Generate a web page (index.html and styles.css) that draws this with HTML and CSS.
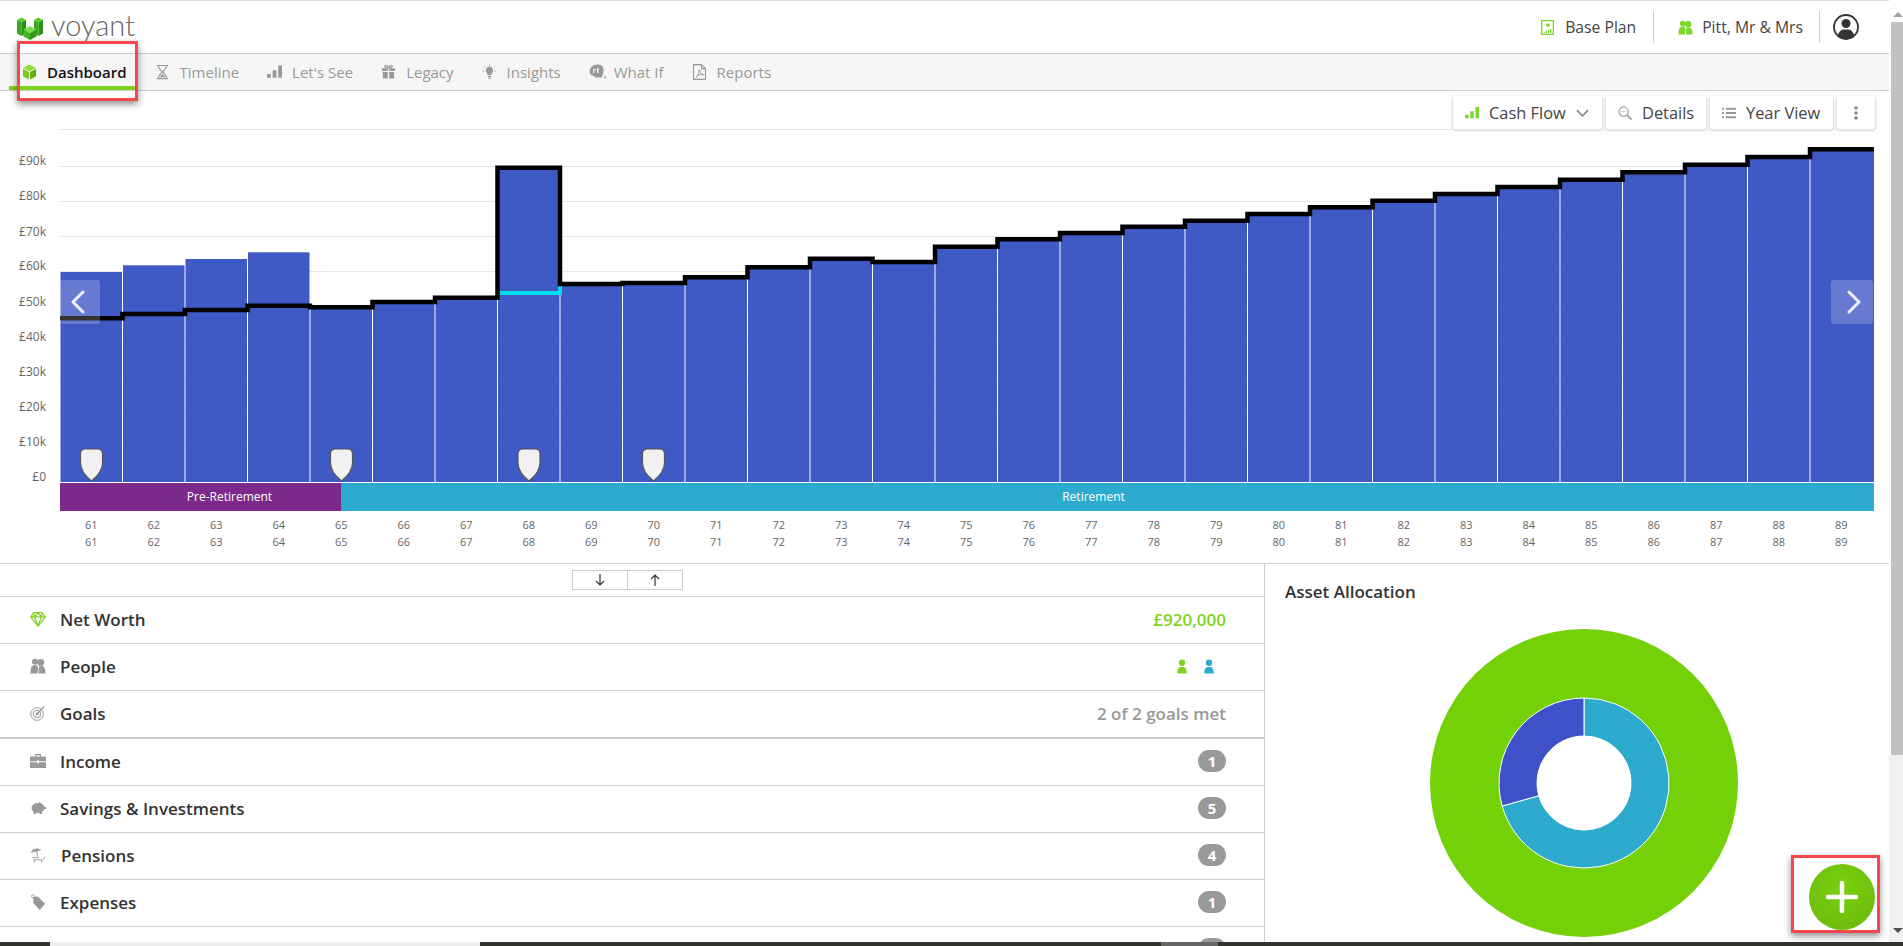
FILE: index.html
```html
<!DOCTYPE html>
<html lang="en">
  <head>
    <meta charset="UTF-8" />
    <title>Voyant - Dashboard</title>
    <link rel="stylesheet" href="styles.css">
  </head>
  <body>
    <svg class="sprites" width="0" height="0">
      <defs>
        <symbol id="i-cube" viewBox="0 0 16 16">
          <path fill="#8fdc2c" d="M8 0l6.600 3.600L8 7.200 1.400 3.600z"/>
          <path fill="#7bc91f" d="M1 4.600l6.400 3.500V16L1 12.400z"/>
          <path fill="#62ad14" d="M15 4.600L8.600 8.100V16l6.400-3.600z"/>
        </symbol>
        <symbol id="i-hourglass" viewBox="0 0 16 16">
          <path fill="none" stroke="currentColor" stroke-width="1.200" d="M2 1h12M2 15h12M3.500 1c0 4 4 5.500 4 7s-4 3-4 7M12.500 1c0 4-4 5.500-4 7s4 3 4 7"/>
          <path fill="currentColor" d="M5 13.500l3-3.500 3 3.500z"/>
        </symbol>
        <symbol id="i-bars" viewBox="0 0 16 16">
          <path fill="currentColor" d="M0 10h4v4H0zM6 6h4v8H6zM12 1h4v13h-4z"/>
        </symbol>
        <symbol id="i-gift" viewBox="0 0 16 16">
          <path fill="currentColor" d="M1 4h6.200v3H1zM8.800 4H15v3H8.800zM2 8h5.200v7H2zM8.800 8H14v7H8.800z"/>
          <path fill="none" stroke="currentColor" stroke-width="1.300" d="M8 3.500C6.500.5 3.500.5 4 2.500c.3 1 2 1 4 1zm0 0c1.500-3 4.500-3 4-1-.3 1-2 1-4 1z"/>
        </symbol>
        <symbol id="i-bulb" viewBox="0 0 16 16">
          <path fill="currentColor" d="M8 2.500a4 4 0 0 1 2.600 7c-.6.600-.8 1.200-.8 2H6.200c0-.8-.2-1.400-.8-2A4 4 0 0 1 8 2.500zM6.400 12.300h3.200v1.200H6.400zM7 14h2v1.500H7z"/>
          <path stroke="currentColor" d="M8 0v1.500M2.500 2l1 1M13.500 2l-1 1M1 7h1.500M13.500 7H15"/>
        </symbol>
        <symbol id="i-whatif" viewBox="0 0 18 16">
          <path fill="currentColor" d="M3 2.500C5 .5 10-.5 12.500 1.500c2.500 2 2.500 6 1.500 8.500l-1 3.500H6L5.500 12C3 12 0 10 .7 6.500c.2-1.500 1-3 2.300-4z"/>
          <path fill="#f6f6f6" d="M4 9h1.300V6H7V5H4.500zM8 9h1.500V4H8z"/>
          <circle cx="16" cy="13.500" r="1" fill="currentColor"/>
        </symbol>
        <symbol id="i-pdf" viewBox="0 0 14 16">
          <path fill="none" stroke="currentColor" stroke-width="1.100" d="M1 .6h8l4 4v10.800H1zM9 .6v4h4"/>
          <path fill="none" stroke="currentColor" stroke-width=".9" d="M3.500 13c2-1 3-4 3-6.500 0-1 1-.8 1 .2C7.500 9 9 11 10.800 11c1 0 .6-1-.5-1-2 0-5 1.500-6.800 3z"/>
        </symbol>
        <symbol id="i-people" viewBox="0 0 16 16">
          <circle cx="5" cy="3.800" r="3" fill="currentColor"/>
          <path fill="currentColor" d="M.5 15.500c0-4.500.5-7 2.500-8.200h4C8.500 9 8 11 7.500 15.500z"/>
          <circle cx="10.800" cy="4.400" r="3.400" fill="currentColor"/>
          <path fill="currentColor" d="M8.500 15.500c0-4 0-6 1-7.500h3c2.500 1 3 3.500 3 7.500z"/>
        </symbol>
        <symbol id="i-person" viewBox="0 0 12 16">
          <circle cx="6" cy="4" r="3.400" fill="currentColor"/>
          <path fill="currentColor" d="M1 15.500c0-3.500.5-6 3-7h4c2.500 1 3 3.500 3 7z"/>
        </symbol>
        <symbol id="i-diamond" viewBox="0 0 16 16">
          <path fill="none" stroke="currentColor" stroke-width="1.200" d="M4 1.500h8l3.300 4.300L8 15 .7 5.800zM.7 5.800h14.600M4.500 5.800L8 15l3.500-9.200M4 1.500l.5 4.300L8 1.500l3.500 4.300.5-4.300"/>
        </symbol>
        <symbol id="i-target" viewBox="0 0 16 16">
          <g fill="none" stroke="currentColor">
            <circle cx="7" cy="9" r="6.300"/>
            <circle cx="7" cy="9" r="3.800"/>
            <path stroke-width="1.300" d="M7 9l7-7.500"/>
          </g>
          <circle cx="7" cy="9" r="1.500" fill="currentColor"/>
        </symbol>
        <symbol id="i-case" viewBox="0 0 16 16">
          <path fill="none" stroke="currentColor" stroke-width="1.200" d="M5.500 3.500V1.700h5v1.800"/>
          <path fill="currentColor" d="M0 3.500h16v4.800H9v-1H7v1H0zM0 9.300h7v1h2v-1h7V15H0z"/>
        </symbol>
        <symbol id="i-piggy" viewBox="0 0 16 16">
          <ellipse cx="8" cy="8" rx="6.500" ry="5" fill="currentColor"/>
          <path fill="currentColor" d="M3.500 10h2.500v4H3.500zM9.500 10H12v4H9.500zM9.500 1.500l3 3.500-4-.5zM14 7h2v2h-2z"/>
        </symbol>
        <symbol id="i-beach" viewBox="0 0 18 18">
          <path fill="currentColor" d="M1 7C2 2 8 0 13 3.500 11 4 9 4.500 7.500 5.500 5.500 5 3 5.500 1 7z"/>
          <path fill="none" stroke="currentColor" d="M7 3l2 8M4 14.500h10l3-3.500M5 14.500v3M13 14.500v3M3 12h7"/>
        </symbol>
        <symbol id="i-tag" viewBox="0 0 16 18">
          <path fill="currentColor" d="M3 3h5l8 8-6 7-7.500-8z"/>
          <circle cx="2.500" cy="2.500" r="1.800" fill="none" stroke="currentColor"/>
        </symbol>
      </defs>
    </svg>

    <div class="app">
      <div class="page">
        <header class="topbar">
          <a class="logo">
            <svg class="logo-mark" viewBox="0 0 26 23">
              <path fill="#56cc2e" d="M0 3l4.500-2.500L9 3 4.500 5.500z"/>
              <path fill="#39a81f" d="M0 3l4.500 2.500V19L0 16.500z"/>
              <path fill="#2b8f18" d="M9 3L4.500 5.500V19L9 16.500z"/>
              <path fill="#56cc2e" d="M17 3l4.500-2.500L26 3l-4.500 2.500z"/>
              <path fill="#39a81f" d="M17 3l4.500 2.500V19L17 16.500z"/>
              <path fill="#2b8f18" d="M26 3l-4.500 2.500V19l4.500-2.500z"/>
              <path fill="#7be04a" d="M6.500 12.500L13 9l6.500 3.500L13 16z"/>
              <path fill="#44b826" d="M6.500 12.500L13 16v7l-6.500-3.500z"/>
              <path fill="#2f9a1c" d="M19.500 12.500L13 16v7l6.500-3.500z"/>
            </svg>
            <span class="logo-text">voyant</span>
          </a>
          <div class="top-links">
            <span class="top-link">
              <svg class="icon-plan" viewBox="0 0 13 15">
                <path fill="none" stroke="#79d92a" stroke-width="1.300" d="M.7.7h11.600v13.600H.7z"/>
                <circle cx="7" cy="5" r="1.800" fill="#79d92a"/>
                <path fill="#79d92a" d="M3 12h1.200v1H3zM5 11h1.200v2H5zM7 10h1.200v3H7zM9 9h1.200v4H9z"/>
              </svg>
              Base Plan
            </span>
            <span class="top-link">
              <svg class="icon-top-people"><use href="#i-people"/></svg>
              Pitt, Mr &amp; Mrs
            </span>
            <span class="top-user">
              <svg viewBox="0 0 26 26" width="26" height="26">
                <circle cx="13" cy="13" r="12" fill="#fff" stroke="#333" stroke-width="1.800"/>
                <circle cx="13" cy="9.500" r="4.500" fill="#333"/>
                <path fill="#333" d="M4.800 21.500c1-4 3.500-5.500 5.500-6h5.400c2 .5 4.500 2 5.500 6a12 12 0 0 1-16.400 0z"/>
              </svg>
            </span>
          </div>
        </header>

        <nav class="tabs">
          <a class="tab active"><svg class="tab-icon"><use href="#i-cube"/></svg>Dashboard</a>
          <a class="tab"><svg class="tab-icon"><use href="#i-hourglass"/></svg>Timeline</a>
          <a class="tab"><svg class="tab-icon"><use href="#i-bars"/></svg>Let's See</a>
          <a class="tab"><svg class="tab-icon"><use href="#i-gift"/></svg>Legacy</a>
          <a class="tab"><svg class="tab-icon"><use href="#i-bulb"/></svg>Insights</a>
          <a class="tab tab-whatif"><svg class="tab-icon"><use href="#i-whatif"/></svg>What If</a>
          <a class="tab"><svg class="tab-icon"><use href="#i-pdf"/></svg>Reports</a>
        </nav>

        <div class="toolbar">
          <button class="tool tool-cash">
            <svg class="tool-icon green"><use href="#i-bars"/></svg>
            Cash Flow
            <svg class="tool-caret" viewBox="0 0 14 8"><path fill="none" stroke="#888" stroke-width="1.800" d="M1 1l6 6 6-6"/></svg>
          </button>
          <button class="tool tool-details">
            <svg class="tool-icon" viewBox="0 0 15 15">
              <circle cx="6" cy="6" r="5" fill="none" stroke="#999" stroke-width="1.200"/>
              <path stroke="#999" stroke-width="1.800" d="M9.800 9.800L14.500 14.500"/>
              <path stroke="#999" stroke-dasharray="1.200 1" d="M3.500 6h5"/>
            </svg>
            Details
          </button>
          <button class="tool tool-year">
            <svg class="tool-icon" viewBox="0 0 15 13">
              <path fill="#999" d="M0 1h2v2H0zM4 1h11v2H4zM0 5.500h2v2H0zM4 5.500h11v2H4zM0 10h2v2H0zM4 10h11v2H4z"/>
            </svg>
            Year View
          </button>
          <button class="tool tool-more">
            <svg viewBox="0 0 4 14" width="4" height="14">
              <circle cx="2" cy="2" r="1.800" fill="#888"/>
              <circle cx="2" cy="7" r="1.800" fill="#888"/>
              <circle cx="2" cy="12" r="1.800" fill="#888"/>
            </svg>
          </button>
        </div>

        <section class="chart">
          <svg class="plot" viewBox="0 129 1889 354" width="1889" height="354">
            <defs>
              <path id="shield" d="M-11 5q0-5 5-5H6q5 0 5 5v9c0 8-6 14-11 18-5-4-11-10-11-18z"/>
            </defs>
            <g class="grid">
              <path d="M60 129.500H1874M60 166.500H1874M60 201.500H1874M60 236.500H1874M60 271.500H1874M60 306.500H1874M60 342.500H1874M60 377.500H1874M60 412.500H1874M60 447.500H1874"/>
            </g>
            <g class="y-labels">
              <text x="46" y="165">£90k</text>
              <text x="46" y="200">£80k</text>
              <text x="46" y="236">£70k</text>
              <text x="46" y="270">£60k</text>
              <text x="46" y="306">£50k</text>
              <text x="46" y="341">£40k</text>
              <text x="46" y="376">£30k</text>
              <text x="46" y="411">£20k</text>
              <text x="46" y="446">£10k</text>
              <text x="46" y="481">£0</text>
            </g>
            <g class="bars">
              <rect x="60.500" y="272" width="61.500" height="210"/>
              <rect x="123" y="265.300" width="61.500" height="216.700"/>
              <rect x="185.500" y="259" width="61.500" height="223"/>
              <rect x="248" y="252.300" width="61.500" height="229.700"/>
              <rect x="310.500" y="307.300" width="61.500" height="174.700"/>
              <rect x="373" y="302" width="61.500" height="180"/>
              <rect x="435.500" y="297.700" width="61.500" height="184.300"/>
              <rect x="498" y="167.700" width="61.500" height="314.300"/>
              <rect x="560.500" y="284" width="61.500" height="198"/>
              <rect x="623" y="283" width="61.500" height="199"/>
              <rect x="685.500" y="277.300" width="61.500" height="204.700"/>
              <rect x="748" y="267.300" width="61.500" height="214.700"/>
              <rect x="810.500" y="258.700" width="61.500" height="223.300"/>
              <rect x="873" y="262" width="61.500" height="220"/>
              <rect x="935.500" y="246.700" width="61.500" height="235.300"/>
              <rect x="998" y="239.300" width="61.500" height="242.700"/>
              <rect x="1060.500" y="233" width="61.500" height="249"/>
              <rect x="1123" y="226.700" width="61.500" height="255.300"/>
              <rect x="1185.500" y="220.700" width="61.500" height="261.300"/>
              <rect x="1248" y="214" width="61.500" height="268"/>
              <rect x="1310.500" y="207.300" width="61.500" height="274.700"/>
              <rect x="1373" y="200.700" width="61.500" height="281.300"/>
              <rect x="1435.500" y="194" width="61.500" height="288"/>
              <rect x="1498" y="187" width="61.500" height="295"/>
              <rect x="1560.500" y="179.700" width="61.500" height="302.300"/>
              <rect x="1623" y="172.300" width="61.500" height="309.700"/>
              <rect x="1685.500" y="164.700" width="61.500" height="317.300"/>
              <rect x="1748" y="157" width="61.500" height="325"/>
              <rect x="1810.500" y="149.300" width="63.500" height="332.700"/>
            </g>
            <path class="bonus" d="M499 293H560V286"/>
            <path class="line" d="M60 318.300H122.500V314H185V310H247.500V305.700H310V307.300H372.500V302H435V297.700H497.500V167.700H560V284H622.500V283H685V277.300H747.500V267.300H810V258.700H872.500V262H935V246.700H997.500V239.300H1060V233H1122.500V226.700H1185V220.700H1247.500V214H1310V207.300H1372.500V200.700H1435V194H1497.500V187H1560V179.700H1622.500V172.300H1685V164.700H1747.500V157H1810V149.300H1874"/>
            <g class="shields">
              <use href="#shield" x="91.500" y="449"/>
              <use href="#shield" x="341.500" y="449"/>
              <use href="#shield" x="529" y="449"/>
              <use href="#shield" x="653.500" y="449"/>
            </g>
            <g class="pager">
              <rect x="60" y="280" width="40" height="44" rx="3"/>
              <rect x="1831" y="280" width="42" height="44" rx="3"/>
              <path d="M83 292L73 302L83 312M1849 292L1859 302L1849 312"/>
            </g>
          </svg>

          <div class="phases">
            <div class="phase phase-pre">Pre-Retirement</div>
            <div class="phase phase-ret">Retirement</div>
          </div>

          <div class="ages">
            <span>61</span><span>62</span><span>63</span><span>64</span><span>65</span><span>66</span><span>67</span><span>68</span><span>69</span><span>70</span>
            <span>71</span><span>72</span><span>73</span><span>74</span><span>75</span><span>76</span><span>77</span><span>78</span><span>79</span><span>80</span>
            <span>81</span><span>82</span><span>83</span><span>84</span><span>85</span><span>86</span><span>87</span><span>88</span><span>89</span>
            <span>61</span><span>62</span><span>63</span><span>64</span><span>65</span><span>66</span><span>67</span><span>68</span><span>69</span><span>70</span>
            <span>71</span><span>72</span><span>73</span><span>74</span><span>75</span><span>76</span><span>77</span><span>78</span><span>79</span><span>80</span>
            <span>81</span><span>82</span><span>83</span><span>84</span><span>85</span><span>86</span><span>87</span><span>88</span><span>89</span>
          </div>
        </section>

        <section class="lower">
          <div class="list">
            <div class="sorter">
              <div class="sorter-box">
                <button><svg viewBox="0 0 10 12" width="10" height="12"><path fill="none" stroke="#333" stroke-width="1.200" d="M5 0v11M1 7l4 4 4-4"/></svg></button>
                <button><svg viewBox="0 0 10 12" width="10" height="12"><path fill="none" stroke="#333" stroke-width="1.200" d="M5 12V1M1 5l4-4 4 4"/></svg></button>
              </div>
            </div>
            <div class="row">
              <svg class="row-icon green"><use href="#i-diamond"/></svg>
              <span class="row-label">Net Worth</span>
              <span class="row-value value-money">£920,000</span>
            </div>
            <div class="row">
              <svg class="row-icon"><use href="#i-people"/></svg>
              <span class="row-label">People</span>
              <span class="row-people">
                <svg class="person green"><use href="#i-person"/></svg>
                <svg class="person teal"><use href="#i-person"/></svg>
              </span>
            </div>
            <div class="row row-last">
              <svg class="row-icon"><use href="#i-target"/></svg>
              <span class="row-label">Goals</span>
              <span class="row-value value-muted">2 of 2 goals met</span>
            </div>
            <div class="row">
              <svg class="row-icon"><use href="#i-case"/></svg>
              <span class="row-label">Income</span>
              <span class="badge">1</span>
            </div>
            <div class="row">
              <svg class="row-icon"><use href="#i-piggy"/></svg>
              <span class="row-label">Savings &amp; Investments</span>
              <span class="badge">5</span>
            </div>
            <div class="row">
              <svg class="row-icon"><use href="#i-beach"/></svg>
              <span class="row-label label-pensions">Pensions</span>
              <span class="badge">4</span>
            </div>
            <div class="row">
              <svg class="row-icon"><use href="#i-tag"/></svg>
              <span class="row-label">Expenses</span>
              <span class="badge">1</span>
            </div>
            <div class="row">
              <span class="row-label"></span>
              <span class="badge"></span>
            </div>
          </div>

          <aside class="allocation">
            <h3>Asset Allocation</h3>
            <svg class="donut" viewBox="-155 -155 310 310" width="310" height="310">
              <circle r="154" fill="#74d108"/>
              <path fill="#2cabcf" stroke="#fff" d="M0-85A85 85 0 1 1-81.800 23L-45.200 12.700A47 47 0 1 0 0-47z"/>
              <path fill="#3f51c9" stroke="#fff" d="M0-85A85 85 0 0 0-81.800 23L-45.200 12.700A47 47 0 0 1 0-47z"/>
              <circle r="47" fill="#fff"/>
            </svg>
          </aside>
        </section>
      </div>

      <div class="scrollbar">
        <span class="arrow-up"></span>
        <div class="thumb"></div>
        <span class="arrow-down"></span>
      </div>
    </div>

    <button class="fab" aria-label="add">
      <svg viewBox="0 0 32 32" width="32" height="32"><path stroke="#fff" stroke-width="4.500" stroke-linecap="round" d="M16 2v28M2 16h28"/></svg>
    </button>
    <div class="callout callout-tab"></div>
    <div class="callout callout-fab"></div>

    <div class="taskbar">
      <span class="task-a"></span>
      <span class="task-b"></span>
      <span class="task-c"></span>
      <span class="task-d"></span>
      <span class="task-e"></span>
    </div>
  </body>
</html>
```

FILE: styles.css
```css
*,
*::before,
*::after {
  box-sizing: border-box;
  margin: 0;
  padding: 0;
}

body {
  font-family: 'Open Sans', 'Liberation Sans', sans-serif;
  color: #333;
  background: #fff;
  height: 100vh;
  overflow: hidden;
}

.sprites {
  position: absolute;
}

.app {
  display: flex;
  height: 946px;
  overflow: hidden;
}

.page {
  width: 1889px;
  flex: none;
  border-top: 1px solid #dcdce2;
}

/* top bar */
.topbar {
  height: 53px;
  border-bottom: 1px solid #ccc;
  display: flex;
  justify-content: space-between;
  align-items: center;
}

.logo {
  display: flex;
  align-items: center;
  gap: 8px;
  padding-left: 17px;
  height: 100%;
}

.logo-mark {
  width: 26px;
  height: 23px;
  margin-top: 3px;
}

.logo-text {
  font-family: Lato, 'Open Sans', sans-serif;
  font-weight: 300;
  font-size: 29px;
  line-height: 1;
  color: #666;
  margin-top: -6px;
}

.top-links {
  display: flex;
  align-items: center;
  padding-right: 30px;
}

.top-link {
  display: flex;
  align-items: center;
  gap: 11px;
  height: 32px;
  font-size: 15.7px;
  color: #444;
  padding-right: 17px;
  margin-right: 24px;
  border-right: 1px solid #ccc;
}

.top-link + .top-link {
  gap: 9px;
  padding-right: 16px;
  margin-right: 13px;
}

.icon-plan {
  width: 13px;
  height: 15px;
}

.icon-top-people {
  width: 15px;
  height: 15px;
  color: #79d92a;
}

.top-user {
  display: flex;
}

/* tabs */
.tabs {
  height: 37px;
  background: #f6f6f6;
  border-bottom: 1px solid #ccc;
  display: flex;
  padding-left: 9px;
}

.tab {
  display: flex;
  align-items: center;
  gap: 10px;
  font-size: 15px;
  color: #999;
  margin-right: 28px;
  padding-bottom: 1px;
}

.tab:first-child {
  padding-left: 13px;
  padding-right: 10px;
  margin-right: 18px;
}

.tab.active {
  color: #111;
  font-weight: 600;
  border-bottom: 4px solid #7ed321;
  padding-top: 4px;
}

.tab-icon {
  width: 15px;
  height: 16px;
  color: #999;
}

.tab-whatif {
  gap: 7px;
}

.tab-whatif .tab-icon {
  width: 18px;
}

/* toolbar */
.toolbar {
  height: 38px;
  display: flex;
  justify-content: flex-end;
  gap: 4px;
  padding: 5px 14px 0 0;
}

.tool {
  height: 33px;
  display: flex;
  align-items: center;
  gap: 10px;
  padding: 0 0 0 12px;
  background: #fff;
  border: 0;
  border-radius: 2px;
  box-shadow: 0 1px 3px rgba(0, 0, 0, 0.35);
  font-family: inherit;
  font-size: 16.4px;
  font-weight: 500;
  color: #444;
}

.tool-cash {
  width: 149px;
}

.tool-details {
  width: 100px;
}

.tool-year {
  width: 123px;
}

.tool-icon {
  width: 14px;
  height: 14px;
  color: #999;
}

.tool-icon.green {
  color: #79d92a;
}

.tool-caret {
  width: 13px;
  height: 8px;
}

.tool-more {
  width: 38px;
  justify-content: center;
  padding: 0;
}

/* chart */
.chart {
  height: 434px;
}

.plot {
  display: block;
}

.grid path {
  stroke: #e8e8e8;
  fill: none;
}

.y-labels text {
  font-size: 12px;
  fill: #666;
  text-anchor: end;
}

.bars rect {
  fill: #3f59c5;
}

.bonus {
  fill: none;
  stroke: #00dde8;
  stroke-width: 4;
}

.line {
  fill: none;
  stroke: #000;
  stroke-width: 4.5;
}

.shields use {
  fill: #f1f1f1;
  stroke: #555;
  stroke-width: 1.2;
}

.pager rect {
  fill: rgba(255, 255, 255, 0.2);
}

.pager path {
  fill: none;
  stroke: #eef;
  stroke-width: 3;
  stroke-linecap: round;
  stroke-linejoin: round;
}

.phases {
  display: flex;
  height: 28px;
  margin-left: 60px;
  width: 1814px;
  color: #fff;
  font-size: 12px;
  line-height: 28px;
  text-align: center;
}

.phase-pre {
  width: 281px;
  padding-left: 58px;
  background: #7b2a8c;
}

.phase-ret {
  flex: 1;
  padding-right: 28px;
  background: #2cabcf;
}

.ages {
  display: grid;
  grid-template-columns: repeat(29, 62.5px);
  grid-auto-rows: 17px;
  margin: 5px 0 0 60px;
  font-size: 11px;
  line-height: 17px;
  color: #666;
  text-align: center;
}

/* lower panels */
.lower {
  display: flex;
  border-top: 1px solid #ccc;
}

.list {
  width: 1265px;
  flex: none;
  border-right: 1px solid #ccc;
}

.sorter {
  height: 33px;
  border-bottom: 1px solid #ccc;
  padding: 6px 0 0 572px;
}

.sorter-box {
  display: flex;
  width: 111px;
  height: 20px;
  border: 1px solid #ccc;
}

.sorter-box button {
  flex: 1;
  background: #fff;
  border: 0;
  display: flex;
  align-items: center;
  justify-content: center;
}

.sorter-box button + button {
  border-left: 1px solid #ccc;
}

.row {
  height: 47px;
  display: flex;
  align-items: center;
  padding: 0 38px 2px 30px;
  border-bottom: 1px solid #ccc;
  font-size: 17px;
}

.row-last {
  height: 48px;
  border-bottom-width: 2px;
}

.row-icon {
  width: 16px;
  height: 16px;
  margin-right: 14px;
  margin-top: -1px;
  color: #999;
}

.row-icon.green {
  color: #7ed321;
}

.row-label {
  font-weight: 600;
  flex: 1;
  color: #333;
}

.label-pensions {
  margin-left: 1px;
}

.row-value {
  font-weight: 600;
}

.value-money {
  color: #7ed321;
}

.value-muted {
  color: #999;
}

.row-people {
  display: flex;
  gap: 15px;
  padding-right: 11px;
}

.person {
  width: 12px;
  height: 15px;
}

.person.green {
  color: #7ed321;
}

.person.teal {
  color: #2cabcf;
}

.badge {
  width: 28px;
  height: 22px;
  border-radius: 11px;
  background: #999;
  color: #fff;
  font-size: 15px;
  font-weight: 700;
  line-height: 22px;
  text-align: center;
}

.allocation {
  flex: 1;
  padding: 17px 0 0 20px;
}

.allocation h3 {
  font-size: 17px;
  line-height: 22px;
  font-weight: 600;
  color: #333;
  margin-bottom: 25px;
}

.donut {
  display: block;
  margin-left: 144px;
}

/* scrollbar */
.scrollbar {
  flex: 1;
  padding-left: 2px;
  background: linear-gradient(#fff 755px, #f1f1f1 755px);
  position: relative;
}

.thumb {
  margin-top: 22px;
  height: 733px;
  background: #c1c1c1;
}

.arrow-up,
.arrow-down {
  position: absolute;
  left: 4px;
  border: 5px solid transparent;
}

.arrow-up {
  top: 7px;
  border-bottom-color: #a3a3a3;
}

.arrow-down {
  top: 928px;
  border-top-color: #505050;
}

/* overlays */
.fab {
  position: fixed;
  left: 1809px;
  top: 864px;
  width: 66px;
  height: 66px;
  border: 0;
  border-radius: 50%;
  background: radial-gradient(circle at 50% 35%, #7ad00e, #69b80c);
  display: grid;
  place-content: center;
}

.callout {
  position: fixed;
  border: 3px solid #f4484c;
  box-shadow: 0 3px 7px rgba(0, 0, 0, 0.45);
}

.callout-tab {
  left: 17px;
  top: 41px;
  width: 121px;
  height: 60px;
}

.callout-fab {
  left: 1791px;
  top: 855px;
  width: 89px;
  height: 78px;
}

.taskbar {
  position: fixed;
  left: 0;
  right: 0;
  bottom: 0;
  height: 4px;
  display: flex;
  background: #33332e;
}

.task-a {
  width: 50px;
}

.task-b {
  width: 430px;
  background: #eee;
}

.task-c {
  width: 681px;
}

.task-d {
  width: 57px;
  background: #666;
}
```
